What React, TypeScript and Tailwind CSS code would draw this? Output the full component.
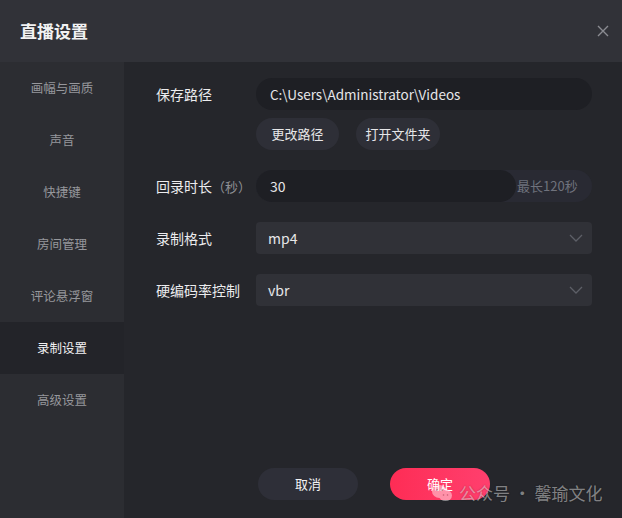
import React from "react";

const font = { fontFamily: '"Noto Sans CJK SC", "Noto Sans", sans-serif' };

const navItems = ["画幅与画质", "声音", "快捷键", "房间管理", "评论悬浮窗", "录制设置", "高级设置"];

function Chevron() {
  return (
    <svg width="14" height="8" viewBox="0 0 14 8" fill="none">
      <path d="M1 1l6 6 6-6" stroke="#5d5f67" strokeWidth="1.3" />
    </svg>
  );
}

function Select({ value }: { value: string }) {
  return (
    <div className="flex h-8 flex-1 items-center justify-between rounded-[4px] bg-[#303137] pl-3 pr-[9px] text-[14px] text-[#e6e6e8]">
      <span>{value}</span>
      <Chevron />
    </div>
  );
}

export default function App() {
  return (
    <div className="relative flex h-[518px] w-[622px] flex-col overflow-hidden bg-[#25262b]" style={font}>
      <div className="flex h-[62px] shrink-0 items-center justify-between bg-[#313238] pl-5 pr-[13px]">
        <span className="text-[17px] font-semibold text-[#f2f2f3]">直播设置</span>
        <svg width="12" height="12" viewBox="0 0 12 12" fill="none">
          <path d="M1 1l10 10M11 1L1 11" stroke="#8b8c92" strokeWidth="1.4" />
        </svg>
      </div>
      <div className="flex flex-1">
        <div className="flex w-[124px] shrink-0 flex-col bg-[#2c2d32]">
          {navItems.map((n) => (
            <div
              key={n}
              className={
                n === "录制设置"
                  ? "flex h-[52px] items-center justify-center bg-[#232429] text-[12.5px] text-[#f2f2f3]"
                  : "flex h-[52px] items-center justify-center text-[12.5px] text-[#96979c]"
              }
            >
              {n}
            </div>
          ))}
          <div className="flex-1" />
        </div>
        <div className="flex flex-1 flex-col pl-8 pr-[30px] pt-4 pb-[18px]">
          <div className="flex items-center">
            <div className="w-[100px] text-[14px] text-[#ececee]">保存路径</div>
            <div className="flex h-8 flex-1 items-center rounded-full bg-[#1e1f24] px-[14px] text-[13.5px] text-[#e6e6e8]">
              C:\Users\Administrator\Videos
            </div>
          </div>
          <div className="mt-2 flex gap-[17px] pl-[100px]">
            <div className="flex h-8 w-[83px] items-center justify-center rounded-full bg-[#2e2f37] text-[13px] text-[#e6e6e8]">更改路径</div>
            <div className="flex h-8 w-[84px] items-center justify-center rounded-full bg-[#2e2f37] text-[13px] text-[#e6e6e8]">打开文件夹</div>
          </div>
          <div className="mt-5 flex items-center">
            <div className="w-[100px] text-[14px] text-[#ececee]">
              回录时长<span className="text-[13px] text-[#8f9095]">（秒）</span>
            </div>
            <div className="flex h-8 flex-1 items-center rounded-full bg-[#292a33]">
              <div className="flex h-8 w-[260px] items-center rounded-full bg-[#1e1f24] px-[14px] text-[14px] text-[#e6e6e8]">30</div>
              <span className="pl-[1px] text-[13px] text-[#6f727d]">最长120秒</span>
            </div>
          </div>
          <div className="mt-5 flex items-center">
            <div className="w-[100px] text-[14px] text-[#ececee]">录制格式</div>
            <Select value="mp4" />
          </div>
          <div className="mt-5 flex items-center">
            <div className="w-[100px] text-[14px] text-[#ececee]">硬编码率控制</div>
            <Select value="vbr" />
          </div>
          <div className="flex-1" />
          <div className="flex justify-center gap-8">
            <div className="flex h-8 w-[100px] items-center justify-center rounded-full bg-[#2e2f38] text-[13px] text-[#f2f2f3]">取消</div>
            <div className="flex h-8 w-[100px] items-center justify-center rounded-full bg-gradient-to-r from-[#fe2c55] to-[#ff3f6e] text-[13px] text-white">确定</div>
          </div>
        </div>
      </div>
      <div className="pointer-events-none absolute left-[431px] top-[480px] flex items-center gap-[6px] text-[17px] text-white/45" style={{ textShadow: "0 0 2px rgba(0,0,0,0.3)" }}>
        <svg width="22" height="18" viewBox="0 0 22 18" fill="none" opacity="0.45">
          <ellipse cx="8.5" cy="7.5" rx="7.5" ry="6.5" fill="white" />
          <ellipse cx="14.5" cy="11.5" rx="6.5" ry="5.5" fill="white" />
          <circle cx="6" cy="6" r="1" fill="#888" />
          <circle cx="11" cy="6" r="1" fill="#888" />
          <circle cx="12.5" cy="11" r="0.8" fill="#888" />
          <circle cx="16.5" cy="11" r="0.8" fill="#888" />
        </svg>
        <span>公众号 · 馨瑜文化</span>
      </div>
    </div>
  );
}
